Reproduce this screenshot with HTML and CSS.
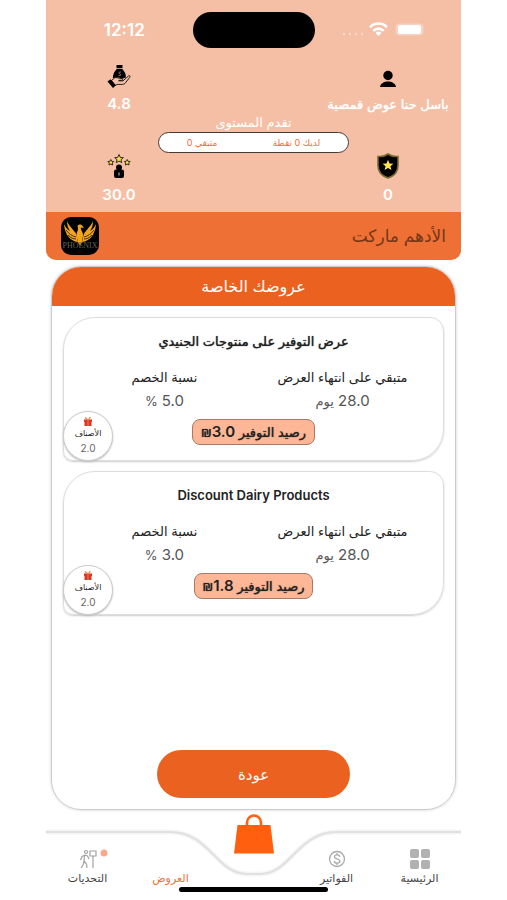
FILE: index.html
```html
<!DOCTYPE html>
<html lang="ar" dir="rtl">
<head>
<meta charset="utf-8">
<meta name="viewport" content="width=device-width, initial-scale=1">
<title>عروضك الخاصة</title>
<link rel="stylesheet" href="styles.css">
</head>
<body>
<div class="app">
  <header class="top">
    <div class="status" dir="ltr">
      <span class="time">12:12</span>
      <span class="island"></span>
      <span class="signals">
        <svg width="84" height="16" viewBox="0 0 84 16" aria-hidden="true">
          <g fill="#fff" opacity=".4"><circle cx="3" cy="12" r="1.200"/><circle cx="9" cy="12" r="1.200"/><circle cx="15" cy="12" r="1.200"/><circle cx="21" cy="12" r="1.200"/></g>
          <g fill="none" stroke="#fff" stroke-width="2.600"><path d="M29 5.300a11.500 11.500 0 0 1 17 0"/><path d="M32.300 8.800a7.300 7.300 0 0 1 10.400 0"/></g>
          <path d="M37.500 14l-3-3a4.300 4.300 0 0 1 6 0z" fill="#fff"/>
          <rect x="54.500" y="1.500" width="28" height="12" rx="4" fill="#fff" opacity=".3"/>
          <rect x="57" y="3" width="23" height="9" rx="2.500" fill="#fff"/>
        </svg>
      </span>
    </div>
    <div class="stats">
      <div class="stat">
        <svg width="24" height="24" viewBox="0 0 24 24" aria-hidden="true"><circle cx="12" cy="11.500" r="4.700"/><path d="M4 23c.5-3.600 4-5.500 8-5.500s7.500 1.900 8 5.500z"/></svg>
        <strong class="name">باسل حنا عوض قمصية</strong>
      </div>
      <div class="stat">
        <svg width="24" height="24" viewBox="0 0 24 24" aria-hidden="true">
          <path d="M9.500 1h6v3h-6zM9.800 5h5.400c2.600 2.400 4 5.500 3.600 8.500l-4 1.500-3-1.500-6 .5C6 11 7 7.600 9.800 5z"/>
          <path d="M9.600 4.500h5.800" stroke="#a58b55" stroke-width=".8"/>
          <path d="M14 8.200c-1.800-.8-2.800 1-1.200 1.700s.8 2.300-1.300 1.500" fill="none" stroke="#b69c92" stroke-width=".8"/>
          <path d="M4.500 16.500l3-2.500c2-1.200 3.500 0 5 .7l2.500.1c1 .4.700 1.700-.4 1.800l-3 .1 4.400.2 5.500-5c1.300-.8 2 .5 1.200 1.500l-4.700 6c-1 1-2.400 1-4 1H10l-2 1.200z" fill="#f5bfa5" stroke="#111" stroke-width=".9"/>
          <path d="M.5 17.500l3-2.300 5.500 6L6 24z"/>
        </svg>
        <strong>4.8</strong>
      </div>
    </div>
    <div class="progress">
      <h2>تقدم المستوى</h2>
      <div class="meter"><span>لديك 0 نقطة</span><span>متبقي 0</span></div>
    </div>
    <div class="stats">
      <div class="stat">
        <svg width="24" height="26" viewBox="0 0 24 26" aria-hidden="true"><path d="M12 1c3 2.200 6.500 2.800 10 2.500v9C22 19 18 23 12 25 6 23 2 19 2 12.500v-9C5.500 3.800 9 3.200 12 1z" stroke="#776a2c" stroke-width="1.600"/><path d="M12 6.800l1.500 3.600 3.900.3-3 2.500 1 3.800-3.400-2-3.400 2 1-3.800-3-2.500 3.900-.3z" fill="#ffe74a"/></svg>
        <strong>0</strong>
      </div>
      <div class="stat">
        <svg width="24" height="26" viewBox="0 0 24 26" aria-hidden="true">
          <g fill="#f1d94b" stroke="#332c1b" stroke-width="1"><path d="M12 1.500l1.300 2.900 3 .3-2.300 2 .7 3-2.700-1.600-2.700 1.600.7-3-2.300-2 3-.3z"/><path d="M3.800 6.500l.9 1.800 2 .2-1.400 1.500.3 2-1.800-.9-1.800.9.300-2L.9 8.500l2-.2z"/><path d="M20.200 6.500l.9 1.800 2 .2-1.400 1.500.3 2-1.800-.9-1.800.9.300-2-1.400-1.500 2-.2z"/></g>
          <circle cx="12" cy="14.500" r="3"/><rect x="7" y="16.500" width="10" height="8.500" rx="2"/><path d="M12 19.500v3" stroke="#b9a79e" stroke-width="1.200"/>
        </svg>
        <strong>30.0</strong>
      </div>
    </div>
    <div class="store">
      <h1>الأدهم ماركت</h1>
      <svg width="38" height="38" viewBox="0 0 38 38" role="img" aria-label="Phoenix">
        <rect width="38" height="38" rx="10"/>
        <g fill="#f0a51d"><path d="M17 25C9 24 4 18 3 7c2 4 4 6 6 7-2-3-3-6-3-10 2 5 5 7 7 10 2 2 3 4 3 7z"/><path d="M21 25c8-1 13-7 14-18-2 4-4 6-6 7 2-3 3-6 3-10-2 5-5 7-7 10-2 2-3 4-3 7z"/><path d="M16.500 9c1-2 4-2 5 0l1.500 2-3-.5c-1 2 2 4 2 7 0 4-1 5-1 8l-2 3-2-3c0-3-1.500-4-1.500-7 0-4 2.500-5 1-9.500z"/></g>
        <g fill="none" stroke="#181307" stroke-width=".8"><path d="M5 13c3 4 6 6 10 7M7 18c3 3 5 4 8 4M33 13c-3 4-6 6-10 7M31 18c-3 3-5 4-8 4"/></g>
        <text x="19" y="31" text-anchor="middle" class="logo-name">PHOENIX</text>
      </svg>
    </div>
  </header>

  <main class="panel">
    <h2 class="panel-title">عروضك الخاصة</h2>
    <div class="offers">
      <article class="offer">
        <h3>عرض التوفير على منتوجات الجنيدي</h3>
        <dl>
          <div><dt>متبقي على انتهاء العرض</dt><dd>28.0 <small>يوم</small></dd></div>
          <div><dt>نسبة الخصم</dt><dd>5.0 <small>%</small></dd></div>
        </dl>
        <p class="saving">رصيد التوفير <bdi>3.0</bdi><b>₪</b></p>
        <div class="items">
          <svg width="8" height="9" viewBox="0 0 8 9" aria-hidden="true"><path d="M0 2.500h8V5H0zM.5 5h7v4h-7z" fill="#e42f2b"/><path d="M1 .5l2.500 2M6.500 0L4.500 2.500M4 2.500V9" stroke="#d7863e" stroke-width="1.200"/></svg>
          <span>الأصناف</span><b>2.0</b>
        </div>
      </article>
      <article class="offer">
        <h3 lang="en">Discount Dairy Products</h3>
        <dl>
          <div><dt>متبقي على انتهاء العرض</dt><dd>28.0 <small>يوم</small></dd></div>
          <div><dt>نسبة الخصم</dt><dd>3.0 <small>%</small></dd></div>
        </dl>
        <p class="saving">رصيد التوفير <bdi>1.8</bdi><b>₪</b></p>
        <div class="items">
          <svg width="8" height="9" viewBox="0 0 8 9" aria-hidden="true"><path d="M0 2.500h8V5H0zM.5 5h7v4h-7z" fill="#e42f2b"/><path d="M1 .5l2.500 2M6.500 0L4.500 2.500M4 2.500V9" stroke="#d7863e" stroke-width="1.200"/></svg>
          <span>الأصناف</span><b>2.0</b>
        </div>
      </article>
    </div>
    <button class="back" type="button">عودة</button>
  </main>

  <nav class="nav">
    <svg class="nav-edge" viewBox="0 0 415 70" preserveAspectRatio="none" aria-hidden="true">
      <path d="M0 18H124C164 18 170 60 201 60H214C245 60 251 18 291 18H415" fill="none" stroke="#f5f5f5" stroke-width="5"/>
      <path d="M0 18H124C164 18 170 60 201 60H214C245 60 251 18 291 18H415" fill="none" stroke="#e0e0e0" stroke-width="2"/>
    </svg>
    <div class="tabs">
      <a href="#home"><svg width="20" height="20" viewBox="0 0 20 20" fill="#b1b1b1" aria-hidden="true"><rect width="9" height="9" rx="2"/><rect x="11" width="9" height="9" rx="2"/><rect y="11" width="9" height="9" rx="2"/><rect x="11" y="11" width="9" height="9" rx="2"/></svg><span>الرئيسية</span></a>
      <a href="#bills"><svg width="20" height="20" viewBox="0 0 20 20" fill="none" stroke="#aaa" stroke-width="1.300" aria-hidden="true"><circle cx="10" cy="10" r="7.500"/><path d="M12.800 7.800c-.3-2.500-5.300-2.500-5.400 0 0 2.800 5.500 1.500 5.500 4.300 0 2.600-5.500 2.600-5.700 0M10 4v2M10 14v2"/></svg><span>الفواتير</span></a>
      <a class="bag" href="#shop" aria-label="المتجر"><svg width="40" height="40" viewBox="0 0 40 40" aria-hidden="true"><path d="M3.500 11h33L40 39.500H0z" fill="#ff5f0f"/><path d="M13 14V8.500a7 7 0 0 1 14 0V14" fill="none" stroke="#ff5f0f" stroke-width="2.600"/></svg></a>
      <a class="active" href="#offers"><span>العروض</span></a>
      <a href="#challenges"><svg width="40" height="20" viewBox="0 0 40 20" fill="none" stroke="#a3a3a3" stroke-width="1.200" aria-hidden="true"><circle cx="18" cy="3" r="1.500"/><path d="M17 6L14 7.500 12.500 11M17 6l2.500 1 1.500 3M16.500 6.500l-.5 5.500 2.500 3 .5 4M16 12l-1 4-2 3M22 2h6v5h-6zM25 7v12"/><circle cx="36" cy="4" r="3.500" fill="#f9a98a" stroke="none"/></svg><span>التحديات</span></a>
    </div>
    <div class="home-bar"></div>
  </nav>
</div>
</body>
</html>
```
FILE: styles.css
```css
* { box-sizing: border-box; }

body {
  margin: 0;
  padding: 0 46px;
  background: #fff;
  color: #222;
  font-family: Inter, "DejaVu Sans", sans-serif;
}

h1, h2, h3, p, dl, dd { margin: 0; font-weight: 400; }

.app {
  display: flex;
  flex-direction: column;
  min-height: 100vh;
}

.top {
  overflow: hidden;
  border-radius: 0 0 10px 10px;
  background: #f5bfa5;
  color: #fff;
}

.status {
  display: grid;
  grid-template-columns: 1fr 122px 1fr;
  align-items: center;
  height: 64px;
  padding-bottom: 5px;
}

.time { padding-left: 10px; text-align: center; font-size: 17px; font-weight: 600; }
.island { height: 36px; border-radius: 18px; background: #000; }
.signals { display: flex; padding-left: 26px; }

.stats { display: flex; justify-content: space-between; padding: 0 8px; }

.stat {
  display: flex;
  flex-direction: column;
  align-items: center;
  gap: 8px;
  width: 130px;
  line-height: 16px;
  white-space: nowrap;
}
.stat strong { font-size: 15px; font-weight: 600; }
.stat .name { font-size: 13px; font-weight: 400; text-shadow: 0 0 1px #fff; }

.progress { display: flex; flex-direction: column; align-items: center; }
.progress h2 { font-size: 13px; line-height: 20px; }

.meter {
  display: flex;
  justify-content: space-around;
  align-items: center;
  width: 46%;
  height: 21px;
  border: 1px solid #443a36;
  border-radius: 11px;
  background: #fff;
  color: #ee7139;
  font-size: 9px;
}

.store {
  display: flex;
  justify-content: space-between;
  align-items: center;
  height: 48px;
  margin-top: 9px;
  padding: 0 15px;
  background: #ee7034;
}
.store h1 { color: #753618; font-size: 17px; }
.logo-name { fill: #66605a; font-family: "Liberation Serif", serif; font-size: 8px; }

.panel {
  display: flex;
  flex: 1;
  flex-direction: column;
  margin: 6px 5px 4px;
  overflow: hidden;
  border: 1px solid #ccc;
  border-radius: 30px;
  box-shadow: 0 0 3px #ccc;
}

.panel-title {
  background: #eb6220;
  color: #fff;
  font-size: 16px;
  line-height: 39px;
  text-align: center;
}

.offers { display: flex; flex-direction: column; gap: 10px; padding: 11px; }

.offer {
  position: relative;
  display: flex;
  flex-direction: column;
  align-items: center;
  height: 144px;
  padding-top: 13px;
  border: 1px solid #ddd;
  border-radius: 32px 14px 32px 10px;
  box-shadow: 0 1px 2px #ccc;
}
.offer h3 { font-size: 13px; line-height: 20px; text-shadow: 0 0 1px #222; }
.offer h3:lang(en) { font-weight: 600; text-shadow: none; }
.offer dl {
  display: grid;
  grid-template-columns: 1fr 1fr;
  width: 94%;
  margin: 14px 0 6px;
  text-align: center;
}
.offer dt { font-size: 13px; line-height: 24px; white-space: nowrap; }
.offer dd { color: #555; font-size: 15px; line-height: 24px; }
.offer small { font-size: 13px; }

.saving {
  padding: 0 8px;
  border: 1px solid #a87964;
  border-radius: 8px;
  background: #fdb696;
  color: #222;
  font-size: 13px;
  line-height: 24px;
  text-shadow: 0 0 1px #222;
}
.saving bdi { font-size: 15px; font-weight: 600; text-shadow: none; }
.saving b { font-size: 13px; font-weight: 400; }

.items {
  position: absolute;
  bottom: -1px;
  left: -1px;
  display: flex;
  flex-direction: column;
  align-items: center;
  width: 50px;
  height: 50px;
  padding-top: 5px;
  border: 1px solid #ccc;
  border-radius: 50%;
  background: #fff;
  box-shadow: 0 1px 2px #bbb;
  font-size: 8px;
  line-height: 15px;
}
.items b { color: #666; font-size: 10px; font-weight: 400; }

.back {
  width: 48%;
  height: 48px;
  margin: auto auto 11px;
  border: 0;
  border-radius: 24px;
  background: #eb6220;
  color: #fff;
  font: inherit;
  font-size: 15px;
}

.nav { position: relative; height: 86px; }
.nav-edge { position: absolute; top: 0; left: 0; width: 100%; height: 70px; }

.tabs {
  position: relative;
  display: grid;
  grid-template-columns: repeat(5, 1fr);
  height: 73px;
}
.tabs a {
  display: flex;
  flex-direction: column;
  justify-content: flex-end;
  align-items: center;
  color: #444;
  font-size: 11px;
  line-height: 18px;
  text-decoration: none;
}
.tabs .bag { justify-content: flex-start; }
.tabs .active { color: #ee7139; }

.home-bar {
  position: relative;
  width: 36%;
  height: 5px;
  margin: 0 auto;
  border-radius: 3px;
  background: #000;
}
```
